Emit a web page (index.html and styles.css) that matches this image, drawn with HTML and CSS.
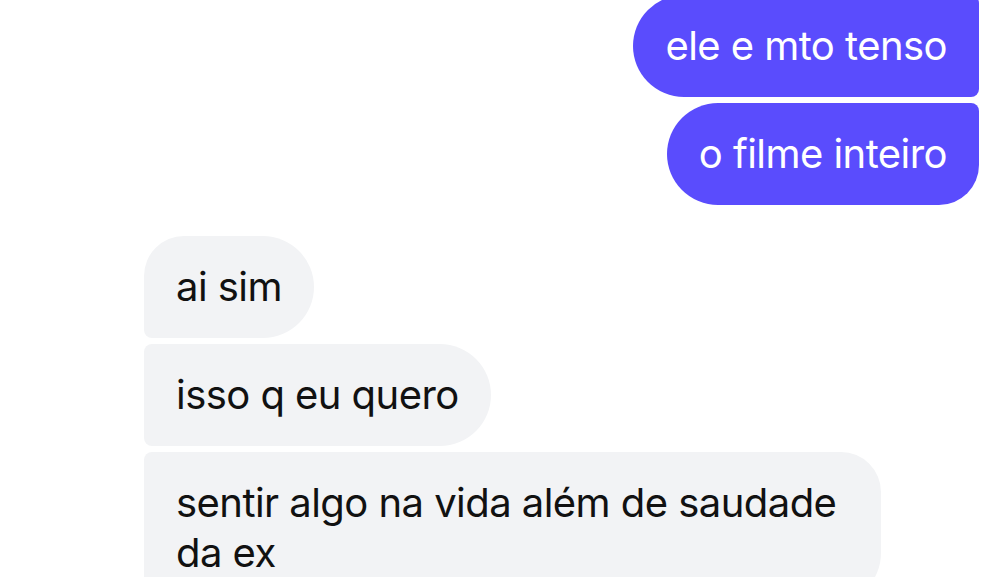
FILE: index.html
```html
<!DOCTYPE html>
<html lang="pt">
<head>
<meta charset="utf-8">
<link rel="stylesheet" href="styles.css">
</head>
<body>
<div class="chat">
  <div class="group sent">
    <div class="bubble first">ele e mto tenso</div>
    <div class="bubble last">o filme inteiro</div>
  </div>
  <div class="group received">
    <div class="bubble first">ai sim</div>
    <div class="bubble mid">isso q eu quero</div>
    <div class="bubble last">sentir algo na vida além de saudade da ex</div>
  </div>
</div>
</body>
</html>
```
FILE: styles.css
```css
html, body {
  margin: 0;
  padding: 0;
  background: #ffffff;
  overflow: hidden;
}
.chat {
  width: 1000px;
  height: 582px;
  display: flex;
  flex-direction: column;
  gap: 31px;
  margin-top: -5px;
  font-family: Inter, "Noto Sans", sans-serif;
  font-size: 40px;
  letter-spacing: -0.55px;
  line-height: 50px;
}
.group {
  display: flex;
  flex-direction: column;
  gap: 6px;
}
.sent {
  align-items: flex-end;
  padding-right: 21px;
}
.received {
  align-items: flex-start;
  padding-left: 144px;
}
.bubble {
  padding: 26px 32px;
  max-width: 673px;
}
.sent .bubble {
  background: #5a4cfd;
  color: #ffffff;
}
.sent .first {
  border-radius: 51px 8px 8px 51px;
}
.sent .last {
  border-radius: 51px 8px 40px 51px;
}
.received .bubble {
  background: #f2f3f5;
  color: #111111;
}
.received .first {
  border-radius: 40px 51px 51px 8px;
}
.received .mid {
  border-radius: 8px 51px 51px 8px;
}
.received .last {
  border-radius: 8px 40px 51px 8px;
}
```
